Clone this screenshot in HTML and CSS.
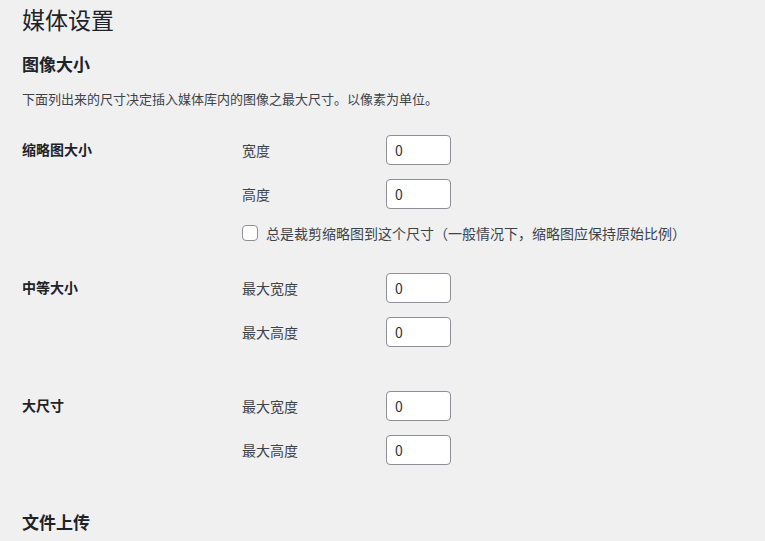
FILE: index.html
```html
<!DOCTYPE html>
<html lang="zh-CN">
<head>
<meta charset="utf-8">
<title>媒体设置</title>
<link rel="stylesheet" href="styles.css">
</head>
<body>
<div class="wrap">
  <h1 class="page-title">媒体设置</h1>
  <h2 class="section-title">图像大小</h2>
  <p class="desc">下面列出来的尺寸决定插入媒体库内的图像之最大尺寸。以像素为单位。</p>

  <div class="form-table">
    <div class="form-row">
      <div class="row-head">缩略图大小</div>
      <div class="row-body">
        <div class="field"><label class="field-label">宽度</label><input class="num" type="text" value="0"></div>
        <div class="field"><label class="field-label">高度</label><input class="num" type="text" value="0"></div>
        <div class="check-line"><span class="checkbox"></span><span class="check-text">总是裁剪缩略图到这个尺寸（一般情况下，缩略图应保持原始比例）</span></div>
      </div>
    </div>
    <div class="form-row">
      <div class="row-head">中等大小</div>
      <div class="row-body">
        <div class="field"><label class="field-label">最大宽度</label><input class="num" type="text" value="0"></div>
        <div class="field"><label class="field-label">最大高度</label><input class="num" type="text" value="0"></div>
      </div>
    </div>
    <div class="form-row">
      <div class="row-head">大尺寸</div>
      <div class="row-body">
        <div class="field"><label class="field-label">最大宽度</label><input class="num" type="text" value="0"></div>
        <div class="field"><label class="field-label">最大高度</label><input class="num" type="text" value="0"></div>
      </div>
    </div>
  </div>

  <h2 class="section-title upload">文件上传</h2>
</div>
</body>
</html>
```
FILE: styles.css
```css
html, body {
  margin: 0;
  padding: 0;
  background: #f0f0f1;
}
body {
  font-family: "Noto Sans CJK SC", "Liberation Sans", sans-serif;
  font-size: 13px;
  color: #3c434a;
  overflow: hidden;
}
.wrap {
  padding-left: 22px;
}
.page-title {
  margin: 0;
  padding-top: 5px;
  font-size: 23px;
  font-weight: 400;
  line-height: 1.3;
  color: #1d2327;
}
.section-title {
  margin: 17px 0 0;
  font-size: 17px;
  font-weight: 600;
  line-height: 1.4;
  color: #1d2327;
}
.section-title.upload {
  margin-top: 16px;
}
.desc {
  margin: 13px 0 12px;
  font-size: 13px;
  line-height: 1.5;
  color: #3c434a;
}
.form-row {
  display: flex;
}
.row-head {
  width: 210px;
  flex: none;
  padding: 20px 0;
  font-size: 14px;
  font-weight: 600;
  line-height: 1.3;
  color: #1d2327;
}
.row-body {
  padding: 15px 10px;
}
.field {
  display: flex;
  align-items: center;
  height: 30px;
  margin-bottom: 14px;
}
.field-label {
  width: 144px;
  font-size: 14px;
  color: #3c434a;
}
.num {
  box-sizing: border-box;
  width: 65px;
  height: 30px;
  margin: 0;
  padding: 0 8px;
  border: 1px solid #8c8f94;
  border-radius: 4px;
  background: #fff;
  font-family: "Noto Sans CJK SC", "Liberation Sans", sans-serif;
  font-size: 14px;
  color: #2c3338;
  outline: none;
}
.check-line {
  display: flex;
  align-items: center;
  height: 20px;
  gap: 8px;
}
.checkbox {
  box-sizing: border-box;
  width: 16px;
  height: 16px;
  border: 1px solid #8c8f94;
  border-radius: 4px;
  background: #fff;
}
.check-text {
  font-size: 14px;
  color: #3c434a;
  white-space: nowrap;
}
```
